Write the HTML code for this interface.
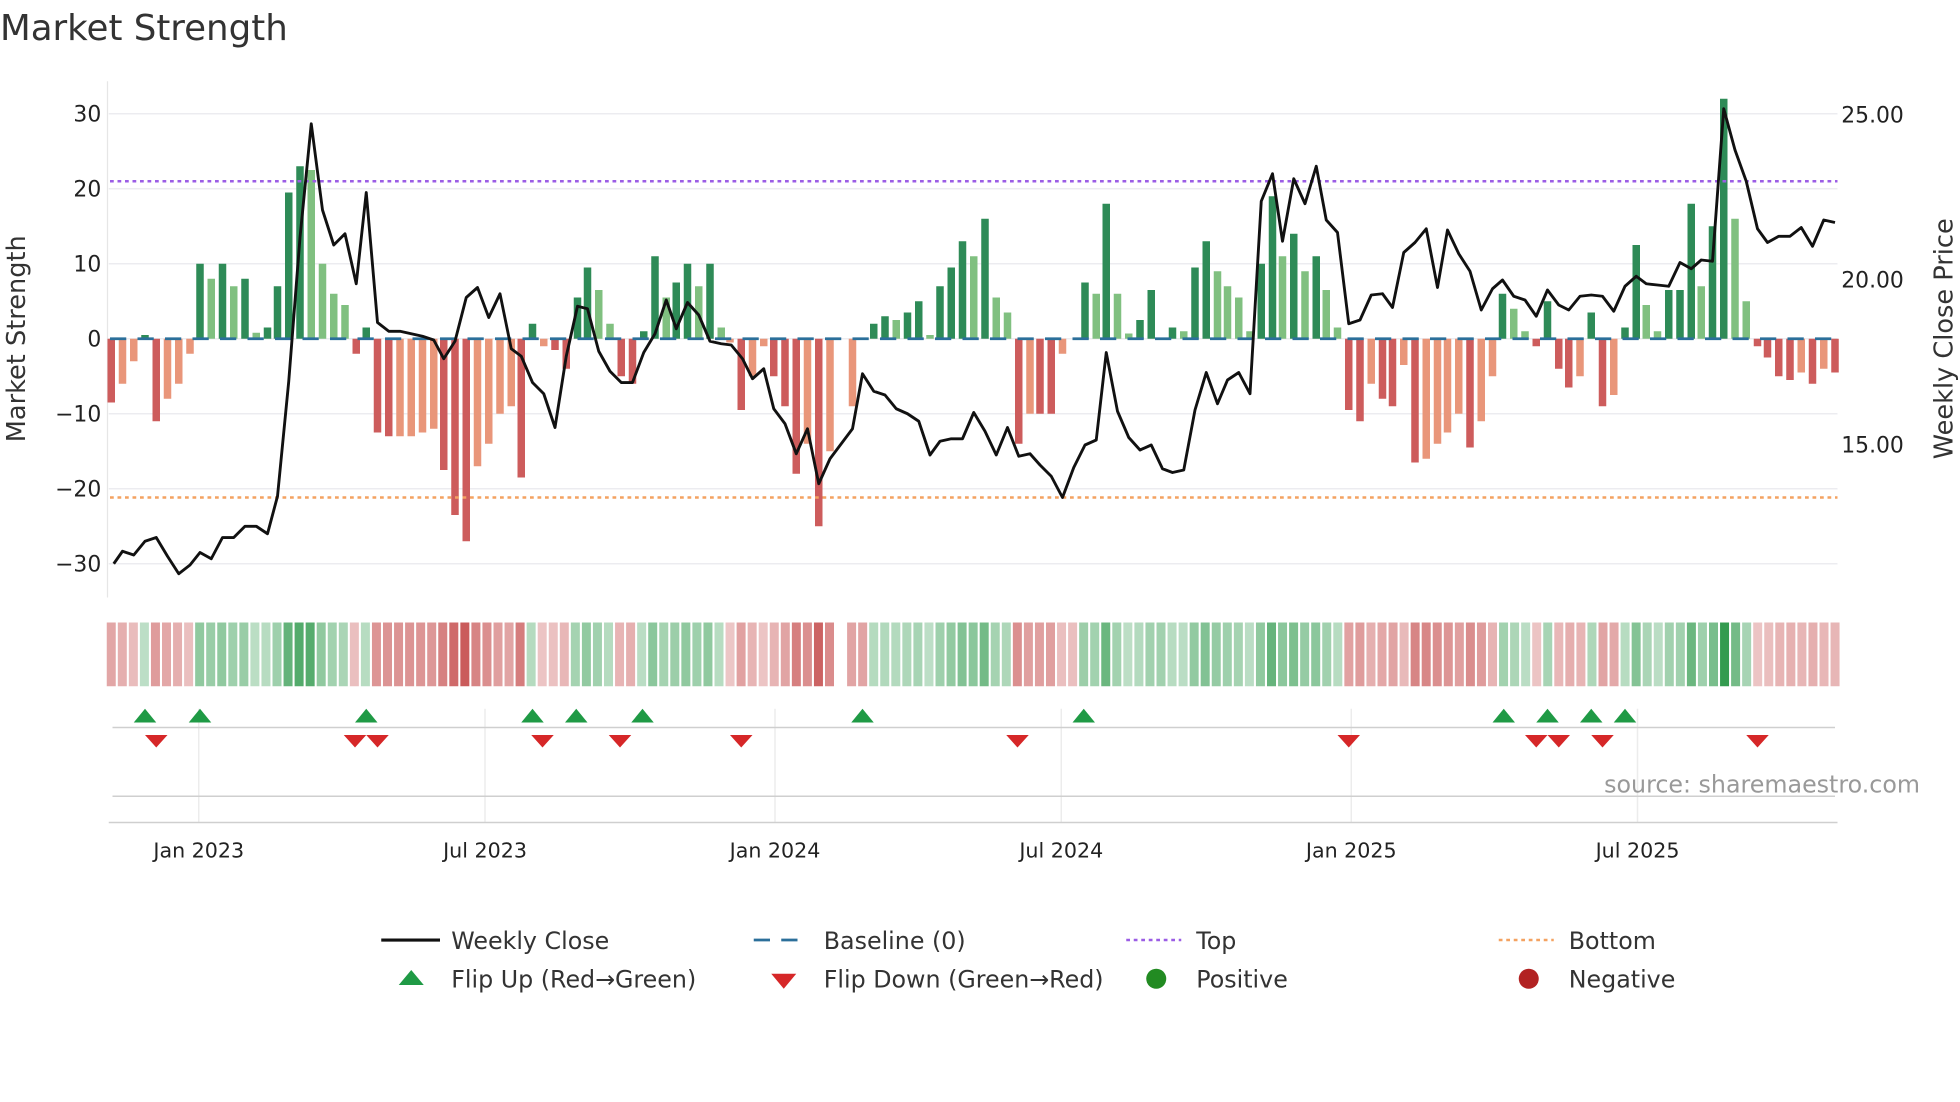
<!DOCTYPE html>
<html><head><meta charset="utf-8"><style>
html,body{margin:0;padding:0;background:#fff;width:1960px;height:1102px;overflow:hidden}
svg{display:block}
text{font-family:"DejaVu Sans","Liberation Sans",sans-serif}
</style></head><body>
<svg id="s" width="1960" height="1102" viewBox="0 0 1568 881.6" xmlns="http://www.w3.org/2000/svg">
<rect width="1568" height="882" fill="#fff"/>
<text x="0" y="32" font-size="28.5" fill="#333">Market Strength</text>
<g id="grid" stroke="#ececf0" stroke-width="1.2"></g>
<line x1="86" y1="65" x2="86" y2="478" stroke="#e6e6e6"/>
<g id="bars"></g>
<line x1="88" y1="145" x2="1470" y2="145" stroke="#9b5de5" stroke-width="2" stroke-dasharray="3,3"/>
<line x1="88" y1="398" x2="1470" y2="398" stroke="#f4a261" stroke-width="2" stroke-dasharray="3,3"/>
<line x1="88" y1="271" x2="1470" y2="271" stroke="#2b6f9a" stroke-width="2.2" stroke-dasharray="13,9"/>
<polyline id="price" fill="none" stroke="#111" stroke-width="2.3" stroke-linejoin="round"/>
<g font-size="17.5" fill="#222" text-anchor="end">
<text x="81" y="97">30</text><text x="81" y="157">20</text><text x="81" y="217">10</text><text x="81" y="277">0</text>
<text x="81" y="337">−10</text><text x="81" y="397">−20</text><text x="81" y="457">−30</text>
</g>
<g font-size="17.5" fill="#222">
<text x="1473" y="98">25.00</text><text x="1473" y="230">20.00</text><text x="1473" y="362">15.00</text>
</g>
<text transform="translate(20,271) rotate(-90)" font-size="20.5" fill="#333" text-anchor="middle">Market Strength</text>
<text transform="translate(1562,271) rotate(-90)" font-size="20.5" fill="#333" text-anchor="middle">Weekly Close Price</text>
<g id="heat"></g>
<g stroke="#ececec" stroke-width="1.2">
<line x1="159" y1="567" x2="159" y2="658"/><line x1="388" y1="567" x2="388" y2="658"/><line x1="620" y1="567" x2="620" y2="658"/>
<line x1="849" y1="567" x2="849" y2="658"/><line x1="1081" y1="567" x2="1081" y2="658"/><line x1="1310" y1="567" x2="1310" y2="658"/>
</g>
<line x1="90" y1="582" x2="1468" y2="582" stroke="#cfcfcf" stroke-width="1.2"/>
<line x1="90" y1="637" x2="1468" y2="637" stroke="#cfcfcf" stroke-width="1.2"/>
<line x1="87" y1="658" x2="1470" y2="658" stroke="#cfcfcf" stroke-width="1.2"/>
<g id="marks"></g>
<text x="1536" y="634" font-size="19" fill="#999" text-anchor="end">source: sharemaestro.com</text>
<g font-size="16.5" fill="#222" text-anchor="middle">
<text x="159" y="686">Jan 2023</text><text x="388" y="686">Jul 2023</text><text x="620" y="686">Jan 2024</text>
<text x="849" y="686">Jul 2024</text><text x="1081" y="686">Jan 2025</text><text x="1310" y="686">Jul 2025</text>
</g>
<g font-size="19" fill="#333">
<line x1="305" y1="752" x2="352" y2="752" stroke="#111" stroke-width="2.5"/><text x="361" y="759">Weekly Close</text>
<line x1="603" y1="752" x2="647" y2="752" stroke="#2b6f9a" stroke-width="2.2" stroke-dasharray="13,9"/><text x="659" y="759">Baseline (0)</text>
<line x1="901" y1="752" x2="945" y2="752" stroke="#9b5de5" stroke-width="2" stroke-dasharray="3,3"/><text x="957" y="759">Top</text>
<line x1="1199" y1="752" x2="1243" y2="752" stroke="#f4a261" stroke-width="2" stroke-dasharray="3,3"/><text x="1255" y="759">Bottom</text>
<polygon points="319,788 329,776 339,788" fill="#1f9a45"/><text x="361" y="790">Flip Up (Red→Green)</text>
<polygon points="617,779 627,791 637,779" fill="#d62728"/><text x="659" y="790">Flip Down (Green→Red)</text>
<circle cx="925" cy="783" r="8" fill="#228b22"/><text x="957" y="790">Positive</text>
<circle cx="1223" cy="783" r="8" fill="#b22222"/><text x="1255" y="790">Negative</text>
</g>
</svg>
<script>
var NS="http://www.w3.org/2000/svg";
function el(p,t,a){var e=document.createElementNS(NS,t);for(var k in a)e.setAttribute(k,a[k]);document.getElementById(p).appendChild(e);return e;}
[91,151,211,271,331,391,451].forEach(function(y){el("grid","line",{x1:87,y1:y,x2:1470,y2:y});});
var B=[[89,-8.5,'d'],[98,-6,'l'],[107,-3,'l'],[116,0.5,'d'],[125,-11,'d'],[134,-8,'l'],[143,-6,'l'],[152,-2,'l'],[160,10,'d'],[169,8,'l'],[178,10,'d'],[187,7,'l'],[196,8,'d'],[205,0.8,'l'],[214,1.5,'d'],[222,7,'d'],[231,19.5,'d'],[240,23,'d'],[249,22.5,'l'],[258,10,'l'],[267,6,'l'],[276,4.5,'l'],[285,-2,'d'],[293,1.5,'d'],[302,-12.5,'d'],[311,-13,'d'],[320,-13,'l'],[329,-13,'l'],[338,-12.5,'l'],[347,-12,'l'],[355,-17.5,'d'],[364,-23.5,'d'],[373,-27,'d'],[382,-17,'l'],[391,-14,'l'],[400,-10,'l'],[409,-9,'l'],[417,-18.5,'d'],[426,2,'d'],[435,-1,'l'],[444,-1.5,'d'],[453,-4,'d'],[462,5.5,'d'],[470,9.5,'d'],[479,6.5,'l'],[488,2,'l'],[497,-5,'d'],[506,-6,'d'],[515,1,'d'],[524,11,'d'],[533,5.5,'l'],[541,7.5,'d'],[550,10,'d'],[559,7,'l'],[568,10,'d'],[577,1.5,'l'],[584,-0.5,'l'],[593,-9.5,'d'],[602,-5,'l'],[611,-1,'l'],[619,-5,'d'],[628,-9,'d'],[637,-18,'d'],[646,-14,'l'],[655,-25,'d'],[664,-15,'l'],[682,-9,'l'],[699,2,'d'],[708,3,'d'],[717,2.5,'l'],[726,3.5,'d'],[735,5,'d'],[744,0.5,'l'],[752,7,'d'],[761,9.5,'d'],[770,13,'d'],[779,11,'l'],[788,16,'d'],[797,5.5,'l'],[806,3.5,'l'],[815,-14,'d'],[824,-10,'l'],[832,-10,'d'],[841,-10,'d'],[850,-2,'l'],[868,7.5,'d'],[877,6,'l'],[885,18,'d'],[894,6,'l'],[903,0.7,'l'],[912,2.5,'d'],[921,6.5,'d'],[938,1.5,'d'],[947,1,'l'],[956,9.5,'d'],[965,13,'d'],[974,9,'l'],[982,7,'l'],[991,5.5,'l'],[1000,1,'l'],[1009,10,'d'],[1018,19,'d'],[1026,11,'l'],[1035,14,'d'],[1044,9,'l'],[1053,11,'d'],[1061,6.5,'l'],[1070,1.5,'l'],[1079,-9.5,'d'],[1088,-11,'d'],[1097,-6,'l'],[1106,-8,'d'],[1114,-9,'d'],[1123,-3.5,'l'],[1132,-16.5,'d'],[1141,-16,'l'],[1150,-14,'l'],[1158,-12.5,'l'],[1167,-10,'l'],[1176,-14.5,'d'],[1185,-11,'l'],[1194,-5,'l'],[1202,6,'d'],[1211,4,'l'],[1220,1,'l'],[1229,-1,'d'],[1238,5,'d'],[1247,-4,'d'],[1255,-6.5,'d'],[1264,-5,'l'],[1273,3.5,'d'],[1282,-9,'d'],[1291,-7.5,'l'],[1300,1.5,'d'],[1309,12.5,'d'],[1317,4.5,'l'],[1326,1,'l'],[1335,6.5,'d'],[1344,6.5,'d'],[1353,18,'d'],[1361,7,'l'],[1370,15,'d'],[1379,32,'d'],[1388,16,'l'],[1397,5,'l'],[1406,-1,'d'],[1414,-2.5,'d'],[1423,-5,'d'],[1432,-5.5,'d'],[1441,-4.5,'l'],[1450,-6,'d'],[1459,-4,'l'],[1468,-4.5,'d']];
var col={pd:"#2e8b57",pl:"#80c080",nd:"#cd5c5c",nl:"#e9967a"};
B.forEach(function(b){var x=b[0],v=b[1],h=Math.abs(v)*6,y=v>0?271-h:271;
el("bars","rect",{x:x-3,y:y,width:6,height:Math.max(h,1),fill:col[(v>0?'p':'n')+b[2]]});});
var H=[];for(var x=89;x<=1469;x+=8.84)H.push(x);
H.forEach(function(x){if(x>668&&x<678)return;var best=null,bd=99;B.forEach(function(b){var d=Math.abs(b[0]-x);if(d<bd){bd=d;best=b;}});
var v=best?best[1]:0;var a=Math.min(Math.abs(v)/30,1);var op=0.3+0.65*a;
var c=v>=0?"rgb(40,150,70)":"rgb(195,70,70)";
el("heat","rect",{x:x-3.6,y:498,width:7.2,height:51,fill:c,"fill-opacity":op});});
var P="91,451 98,441 107,444 116,433 125,430 134,445 143,459 152,452 160,442 169,447 178,430 187,430 196,421 205,421 214,427 222,397 231,305 240,190 249,99 258,168 267,196 276,187 285,227 293,154 302,258 311,265 320,265 329,267 338,269 347,272 355,287 364,273 373,238 382,230 391,254 400,235 409,279 417,285 426,306 435,315 444,342 453,285 462,245 470,247 479,281 488,297 497,306 506,306 515,282 524,267 533,240 541,263 550,242 559,252 568,273 577,275 585,276 594,287 602,303 611,295 619,327 628,339 637,363 646,343 655,387 664,367 673,355 682,343 690,299 699,313 708,316 717,327 726,331 735,337 744,364 752,353 761,351 770,351 779,330 788,345 797,364 806,342 815,365 824,363 832,372 841,381 850,398 859,374 868,356 877,352 885,282 894,329 903,350 912,360 921,356 930,375 938,378 947,376 956,328 965,298 974,323 982,304 991,298 1000,315 1009,161 1018,139 1026,193 1035,143 1044,163 1053,133 1061,176 1070,186 1079,259 1088,256 1097,236 1106,235 1114,246 1123,202 1132,194 1141,183 1150,230 1158,184 1167,203 1176,217 1185,248 1194,231 1202,224 1211,237 1220,240 1229,253 1238,232 1247,244 1255,248 1264,237 1273,236 1282,237 1291,249 1300,229 1309,221 1317,227 1326,228 1335,229 1344,210 1353,215 1361,208 1370,209 1379,87 1388,120 1397,145 1406,183 1414,194 1423,189 1432,189 1441,182 1450,197 1459,176 1468,178";
document.getElementById("price").setAttribute("points",P);
[116,160,293,426,461,514,690,867,1203,1238,1273,1300].forEach(function(x){el("marks","polygon",{points:(x-9)+",578 "+x+",567 "+(x+9)+",578",fill:"#1f9a45"});});
[125,284,302,434,496,593,814,1079,1229,1247,1282,1406].forEach(function(x){el("marks","polygon",{points:(x-9)+",588 "+x+",598 "+(x+9)+",588",fill:"#d62728"});});
</script>
</body></html>
